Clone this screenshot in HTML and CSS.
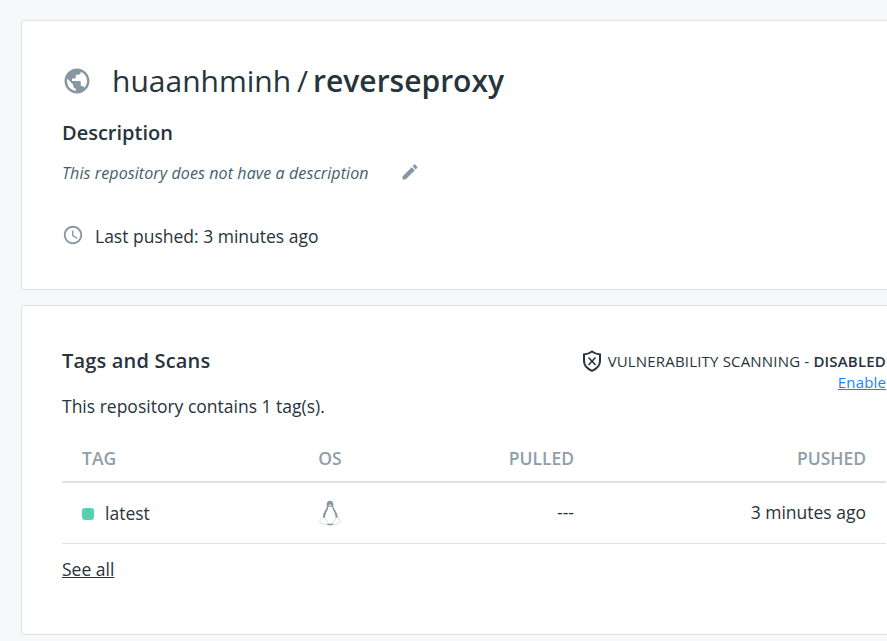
FILE: index.html
```html
<!DOCTYPE html>
<html lang="en">
<head>
<meta charset="utf-8">
<title>huaanhminh/reverseproxy</title>
<link rel="stylesheet" href="styles.css">
</head>
<body>
<main class="page">
  <section class="card summary">
    <h1 class="repo">
      <svg class="globe" viewBox="0 0 24 24"><path d="M12 2C6.480 2 2 6.480 2 12s4.480 10 10 10 10-4.480 10-10S17.520 2 12 2zm-1 17.930c-3.950-.49-7-3.850-7-7.930 0-.62.08-1.210.21-1.790L9 15v1c0 1.100.9 2 2 2v1.930zm6.900-2.540c-.26-.81-1-1.390-1.900-1.390h-1v-3c0-.55-.45-1-1-1H8v-2h2c.55 0 1-.45 1-1V7h2c1.100 0 2-.9 2-2v-.41c2.930 1.190 5 4.060 5 7.410 0 2.080-.8 3.970-2.100 5.390z"/></svg>
      <span class="owner">huaanhminh</span><span class="slash">/</span><span class="name">reverseproxy</span>
    </h1>
    <h2 class="heading">Description</h2>
    <div class="description">
      <em class="empty">This repository does not have a description</em>
      <svg class="pencil" viewBox="0 0 24 24"><path d="M3 17.250V21h3.750L17.810 9.940l-3.750-3.750L3 17.250zM20.710 7.040c.39-.39.39-1.020 0-1.410l-2.340-2.340c-.39-.39-1.020-.39-1.410 0l-1.830 1.830 3.750 3.750 1.830-1.830z"/></svg>
    </div>
    <div class="pushed">
      <svg class="clock" viewBox="0 0 24 24"><path d="M11.990 2C6.470 2 2 6.480 2 12s4.470 10 9.990 10C17.520 22 22 17.520 22 12S17.520 2 11.990 2zM12 20c-4.420 0-8-3.580-8-8s3.580-8 8-8 8 3.580 8 8-3.580 8-8 8zm.5-13H11v6l5.250 3.150.75-1.230-4.500-2.670z"/></svg>
      <span class="pushed-text">Last pushed: 3 minutes ago</span>
    </div>
  </section>

  <section class="card tags">
    <header class="tags-head">
      <h2 class="heading tags-title">Tags and Scans</h2>
      <div class="scan">
        <div class="scan-status">
          <svg class="shield" viewBox="0 0 20 24"><path d="M10 2.500c2.300 1.700 4.700 2.700 8 3v6.500c0 4.700-3.300 7.800-8 9.900-4.700-2.100-8-5.200-8-9.900v-6.500c3.300-.3 5.700-1.300 8-3z"/><path class="cross" d="M6.500 8.500l7 7.500M13.500 8.500l-7 7.500"/></svg>
          <span class="scan-label">VULNERABILITY SCANNING - <b>DISABLED</b></span>
        </div>
        <a class="enable">Enable</a>
      </div>
    </header>
    <p class="count">This repository contains 1 tag(s).</p>
    <table class="table">
      <colgroup><col class="c-tag"><col class="c-os"><col class="c-pulled"><col class="c-pushed"></colgroup>
      <thead><tr><th>TAG</th><th class="mid">OS</th><th class="end">PULLED</th><th class="end">PUSHED</th></tr></thead>
      <tbody><tr>
        <td><span class="tag"><i class="dot"></i><span class="tag-name">latest</span></span></td>
        <td class="mid"><svg class="tux" viewBox="0 0 22 26">
          <path class="feather" d="M11 .8C8.600.8 7.500 2.500 7.700 5c.2 2-.2 3.100-1.600 5.500C4.600 13 3.700 15 3.900 18.500l2.200-.3c-.2-2.700.8-4.900 2-7.200.8-1.500 1-2.600 1.200-4.200h4c.1 1.700.6 2.900 1.300 4.200 1.300 2.300 2.100 4.300 2 7l2.200.3c.1-3.200-1-5.500-2.500-7.800C14.800 8.200 14.300 7.200 14.300 5c.1-2.500-.9-4.200-3.300-4.200z"/>
          <path class="beak" d="M9.300 5.100l1.800-.8 1.800.8-1.800 1.200z"/>
          <path class="base" d="M8 23.800c2 1 4.200 1 6 0"/>
          <path class="foot" d="M4.200 17.500l2 .8 2.600 4.200c.3 1.500-1 2.500-2.500 2l-5-1.500c-.9-.5 0-1.800-.2-3 0-1.300 2-.9 3.100-2.500zM18.400 17.500l-2 .8-2.200 4.200c-.3 1.500 1.200 2.500 2.700 2l4-2.700c.9-.7-.1-1.200-.6-2.200-.3-1-.7-1.300-1.900-2.100z"/>
        </svg></td>
        <td class="end">---</td>
        <td class="end">3 minutes ago</td>
      </tr></tbody>
    </table>
    <a class="see-all">See all</a>
  </section>
</main>
</body>
</html>
```
FILE: styles.css
```css
* { box-sizing: border-box; }
body {
  margin: 0;
  height: 641px;
  overflow: hidden;
  background: #f7f8fa;
  color: #27343b;
  font-family: "Open Sans", sans-serif;
  font-size: 17.5px;
}
h1, h2, p { margin: 0; }
svg { display: block; flex: none; fill: #8697a1; }
.page {
  display: flex;
  flex-direction: column;
  gap: 15px;
  width: 930px;
  padding: 20px 0 0 21px;
}
.card {
  background: #fff;
  border: 1px solid #dfe0e2;
  border-radius: 3px;
  padding: 40px 43px 0 40px;
}
.summary { height: 270px; }
.tags { height: 330px; }
.repo {
  display: flex;
  align-items: center;
  height: 40px;
  font-size: 30px;
  line-height: 40px;
  font-weight: 400;
}
.owner, .slash, .name { height: 40px; }
.globe { width: 30px; height: 30px; }
.owner { margin-left: 20px; }
.slash { margin: 0 5px 0 6px; }
.name { font-weight: 600; }
.heading {
  height: 28px;
  margin-top: 18px;
  font-size: 20px;
  line-height: 28px;
  font-weight: 600;
}
.description {
  display: flex;
  align-items: center;
  gap: 31px;
  height: 24px;
  margin-top: 13px;
}
.empty { padding-top: 1px; font-size: 16px; letter-spacing: .1px; color: #445d6e; }
.pencil { width: 20px; height: 20px; }
.pushed {
  display: flex;
  align-items: center;
  gap: 11px;
  height: 26px;
  margin-top: 38px;
}
.pushed-text { padding-top: 2px; }
.clock { width: 22px; height: 22px; }
.tags-head { display: flex; justify-content: space-between; height: 47px; }
.tags-title { margin-top: 1px; letter-spacing: .18px; }
.scan { display: flex; flex-direction: column; align-items: flex-end; padding-top: 4px; }
.scan-status { display: flex; align-items: center; gap: 6px; height: 22px; font-size: 15px; letter-spacing: .18px; }
.scan-status b { font-weight: 600; }
.shield { width: 20px; height: 24px; fill: none; stroke: #27343b; stroke-width: 2; }
.cross { stroke-width: 1.6; }
.enable { font-size: 15px; letter-spacing: .15px; line-height: 21px; color: #1a84f5; text-decoration: underline; }
.count { height: 26px; line-height: 26px; }
.table { width: 824px; margin-top: 15px; border-collapse: separate; border-spacing: 0; table-layout: fixed; }
.c-tag { width: 208px; }
.c-os { width: 120px; }
.c-pulled { width: 204px; }
th, td { padding: 0 20px; text-align: left; }
th { height: 49px; border-bottom: 2px solid #dfe0e2; color: #8f9ea8; font-weight: 600; }
td { height: 61px; padding-bottom: 2px; border-bottom: 1px solid #dfe0e2; }
.mid { text-align: center; }
.end { text-align: right; }
.tag { display: flex; align-items: center; gap: 11px; }
.tag-name { padding-top: 2px; }
.dot { width: 12px; height: 12px; margin-top: 3px; border-radius: 3px; background: #58d0b2; }
.tux { width: 22px; height: 26px; margin: 2px auto 0; }
.beak { fill: #dce2e5; }
.base { fill: none; stroke: #8697a1; stroke-width: 1.5; }
.foot { fill: #fff; stroke: #cbd3d8; stroke-width: .8; }
.see-all { display: inline-block; margin-top: 13px; line-height: 25px; text-decoration: underline; }
```
